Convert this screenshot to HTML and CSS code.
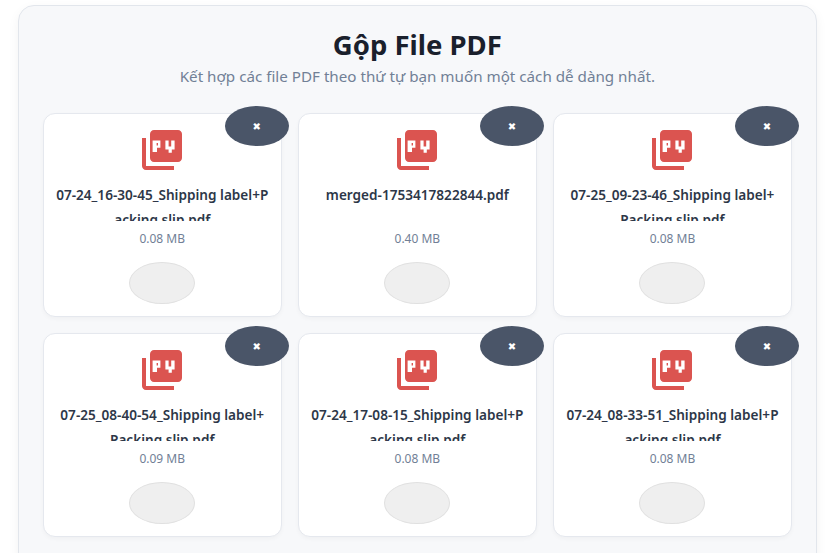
FILE: index.html
```html
<!DOCTYPE html>
<html lang="en">

<head>
    <meta charset="UTF-8">
    <meta name="viewport" content="width=device-width, initial-scale=1.0">
    <title>Gộp File PDF</title>
    <link rel="stylesheet" href="styles.css">
</head>

<body>
    <svg class="icon-defs" width="0" height="0">
        <symbol id="pdfIcon" viewBox="0 0 24 24">
            <path d="M20 2H8c-1.1 0-2 .9-2 2v12c0 1.1.9 2 2 2h12c1.1 0 2-.9 2-2V4c0-1.100-.9-2-2-2zM4 6H2v14c0 1.100.9 2 2 2h14v-2H4V6z" />
            <path class="pdf-letters" fill-rule="evenodd" d="M7.300 7.300H11.200V10.900H9.500V13H7.300zM9.300 8.500V9.700H10V8.500zM13.700 7.300H15.300V10.200H16.600V7.300H18.300V11.700H16.900V13.400H15.300V11.700H13.700z" />
        </symbol>
    </svg>

    <!-- Merge PDF panel -->
    <div class="merge-panel">
        <h1>Gộp File PDF</h1>
        <p class="subtitle">Kết hợp các file PDF theo thứ tự bạn muốn một cách dễ dàng nhất.</p>

        <div class="file-grid">
            <div class="file-card">
                <button class="remove-btn">✖</button>
                <svg class="pdf-icon"><use href="#pdfIcon" /></svg>
                <div class="file-name">07-24_16-30-45_Shipping label+Packing slip.pdf</div>
                <div class="file-size">0.08 MB</div>
                <button class="move-btn"></button>
            </div>
            <div class="file-card">
                <button class="remove-btn">✖</button>
                <svg class="pdf-icon"><use href="#pdfIcon" /></svg>
                <div class="file-name">merged-1753417822844.pdf</div>
                <div class="file-size">0.40 MB</div>
                <button class="move-btn"></button>
            </div>
            <div class="file-card">
                <button class="remove-btn">✖</button>
                <svg class="pdf-icon"><use href="#pdfIcon" /></svg>
                <div class="file-name">07-25_09-23-46_Shipping label+<br>Packing slip.pdf</div>
                <div class="file-size">0.08 MB</div>
                <button class="move-btn"></button>
            </div>
            <div class="file-card">
                <button class="remove-btn">✖</button>
                <svg class="pdf-icon"><use href="#pdfIcon" /></svg>
                <div class="file-name">07-25_08-40-54_Shipping label+<br>Packing slip.pdf</div>
                <div class="file-size">0.09 MB</div>
                <button class="move-btn"></button>
            </div>
            <div class="file-card">
                <button class="remove-btn">✖</button>
                <svg class="pdf-icon"><use href="#pdfIcon" /></svg>
                <div class="file-name">07-24_17-08-15_Shipping label+Packing slip.pdf</div>
                <div class="file-size">0.08 MB</div>
                <button class="move-btn"></button>
            </div>
            <div class="file-card">
                <button class="remove-btn">✖</button>
                <svg class="pdf-icon"><use href="#pdfIcon" /></svg>
                <div class="file-name">07-24_08-33-51_Shipping label+Packing slip.pdf</div>
                <div class="file-size">0.08 MB</div>
                <button class="move-btn"></button>
            </div>
        </div>
    </div>
</body>

</html>
```

FILE: styles.css
```css
/* General Styles */
html,
body {
    margin: 0;
    height: 100%;
    overflow: hidden;
    background-color: #ffffff;
    font-family: "Noto Sans", Arial, sans-serif;
}

.icon-defs {
    display: block;
    height: 0;
}

.merge-panel {
    margin: 5px 8px 0 18px;
    padding: 24px 24px 32px 23.7px;
    background: #f7f8fa;
    border: 1px solid #e2e6ec;
    border-radius: 16px;
    box-shadow: 0 4px 12px rgba(0, 0, 0, 0.05);
}

h1 {
    margin: 0;
    text-align: center;
    font-size: 27.5px;
    line-height: 29px;
    font-weight: 700;
    color: #1a202c;
}

.subtitle {
    margin: 5px 0 25px;
    text-align: center;
    font-size: 15.2px;
    line-height: 24px;
    color: #718096;
}

.file-grid {
    display: grid;
    grid-template-columns: repeat(3, 1fr);
    gap: 16px;
}

.file-card {
    position: relative;
    display: flex;
    flex-direction: column;
    align-items: center;
    padding: 12px;
    background: #ffffff;
    border: 1px solid #e5e8ee;
    border-radius: 12px;
    box-shadow: 0 2px 4px rgba(0, 0, 0, 0.03);
}

.remove-btn {
    position: absolute;
    top: -8px;
    right: -8px;
    width: 64px;
    height: 40px;
    padding: 0;
    border: none;
    border-radius: 50%;
    background: #4a5568;
    color: #ffffff;
    font-size: 10px;
    font-family: "DejaVu Sans", sans-serif;
}

.pdf-icon {
    width: 48px;
    height: 48px;
    fill: #db5450;
}

.pdf-letters {
    fill: #ffffff;
}

.file-name {
    width: 100%;
    height: 38.5px;
    margin-top: 8px;
    overflow: hidden;
    text-align: center;
    word-break: break-all;
    font-size: 13.6px;
    line-height: 25px;
    font-weight: 600;
    color: #2d3748;
}

.file-size {
    margin-top: 10px;
    font-size: 12px;
    line-height: 16px;
    color: #718096;
}

.move-btn {
    width: 66px;
    height: 42px;
    margin-top: 15.5px;
    padding: 0;
    background: #efefef;
    border: 1px solid #e0e0e0;
    border-radius: 50%;
}
```
